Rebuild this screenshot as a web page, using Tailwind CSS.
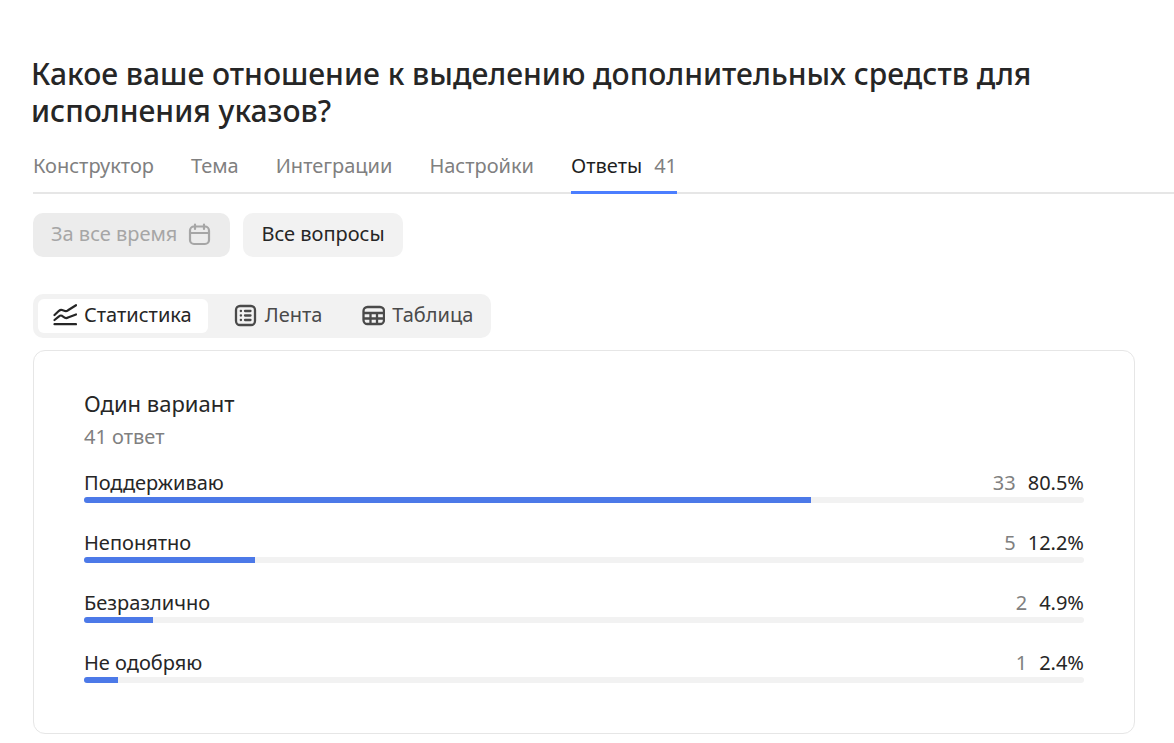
<!DOCTYPE html>
<html lang="ru">
  <head>
    <meta charset="UTF-8" />
    <meta name="viewport" content="width=device-width, initial-scale=1.0" />
    <title>Ответы на опрос</title>
    <script src="https://cdn.jsdelivr.net/npm/@tailwindcss/browser@4"></script>
  </head>
  <body class="min-h-screen bg-white pl-[33px] pt-[55px] pb-2 font-['Noto_Sans','Open_Sans',sans-serif] text-xl leading-7 text-[#262626]">
    <!-- Header -->
    <header>
      <h1 class="-ml-0.5 mr-24 text-[30px] leading-[37px] font-medium">Какое ваше отношение к выделению дополнительных средств для исполнения указов?</h1>

      <!-- Tabs -->
      <nav class="mt-[23px] flex gap-[37px] border-b-2 border-[#e6e6e6] text-[#808080]">
        <a href="#" class="pb-3">Конструктор</a>
        <a href="#" class="pb-3">Тема</a>
        <a href="#" class="pb-3">Интеграции</a>
        <a href="#" class="pb-3">Настройки</a>
        <a href="#" aria-current="page" class="-mb-0.5 flex gap-3 border-b-3 border-[#4b7eff] text-[#1f1f1f]">Ответы <span class="text-[#808080]">41</span></a>
      </nav>
    </header>

    <main class="mr-[39px]">
      <!-- Filters -->
      <div class="mt-[19px] flex gap-[13px]">
        <button type="button" disabled class="flex h-11 items-center gap-[11px] rounded-[10px] bg-[#ececec] px-[18px] text-[#a6a6a6]">
          <span class="pb-0.5">За все время</span>
          <svg class="size-6" viewBox="0 0 24 24" fill="none" stroke="currentColor" stroke-width="2.2" stroke-linecap="round">
            <rect x="2" y="3.500" width="19" height="17.500" rx="4" />
            <path d="M2 10h19M7 1.500v4.500M16 1.500v4.500" />
          </svg>
        </button>
        <button type="button" class="h-11 rounded-[10px] bg-[#f2f2f2] px-[18px] pb-0.5">Все вопросы</button>
      </div>

      <!-- View switcher -->
      <div class="mt-[37px] flex h-11 w-fit rounded-[10px] bg-[#f2f2f2] p-[5px] text-[#4a4a4a]">
        <button type="button" aria-pressed="true" class="flex items-center gap-[7px] rounded-md bg-white pr-4 pl-[15px] text-[#262626]">
          <svg class="size-6" viewBox="0 0 24 24" fill="none" stroke="currentColor" stroke-width="2.2" stroke-linecap="round" stroke-linejoin="round">
            <path d="M1.500 11L6 6.800Q7.500 5.500 9 6L12 7Q13.500 7.400 15 6.300L23 1.200" />
            <path d="M1.500 16L6 12.300Q7.500 11 9 11.800L12 13.800Q13.500 14.500 15 13.500L23 10.500" />
            <path d="M1.500 20.200H23" />
          </svg>
          <span class="pb-0.5">Статистика</span>
        </button>
        <button type="button" class="flex items-center gap-[7px] px-[26px]">
          <svg class="size-6" viewBox="0 0 24 24" fill="none" stroke="currentColor" stroke-width="2.3" stroke-linecap="round">
            <rect x="2" y="2" width="19" height="19" rx="4" />
            <path d="M11 7h5.500M11 11.500h5.500M11 16h5.500M6.800 7h.2M6.800 11.500h.2M6.800 16h.2" />
          </svg>
          <span class="pb-0.5">Лента</span>
        </button>
        <button type="button" class="flex items-center gap-[7px] px-[13px]">
          <svg class="size-6" viewBox="0 0 24 24" fill="none" stroke="currentColor" stroke-width="2.3">
            <rect x="2.500" y="3" width="20.500" height="17" rx="4" />
            <path d="M2.500 9H23M2.500 14.500H23M9.500 9V20M16 9V20" />
          </svg>
          <span class="pb-0.5">Таблица</span>
        </button>
      </div>

      <!-- Statistics card -->
      <section class="mt-3 rounded-xl border border-[#e6e6e6] px-[50px] pt-[37px] pb-[50px]">
        <h2 class="text-[22px] leading-[30px]">Один вариант</h2>
        <p class="mt-[5px] text-[#808080]">41 ответ</p>
        <ul class="mt-[18px] flex flex-col gap-[26px]">
          <li>
            <div class="flex gap-3"><span class="grow">Поддерживаю</span><span class="text-[#808080]">33</span><span>80.5%</span></div>
            <div class="h-1.5 overflow-hidden rounded-full bg-[#f2f2f2]"><div class="h-full bg-[#4c79e8]" style="width: 72.7%"></div></div>
          </li>
          <li>
            <div class="flex gap-3"><span class="grow">Непонятно</span><span class="text-[#808080]">5</span><span>12.2%</span></div>
            <div class="h-1.5 overflow-hidden rounded-full bg-[#f2f2f2]"><div class="h-full bg-[#4c79e8]" style="width: 17.1%"></div></div>
          </li>
          <li>
            <div class="flex gap-3"><span class="grow">Безразлично</span><span class="text-[#808080]">2</span><span>4.9%</span></div>
            <div class="h-1.5 overflow-hidden rounded-full bg-[#f2f2f2]"><div class="h-full bg-[#4c79e8]" style="width: 6.9%"></div></div>
          </li>
          <li>
            <div class="flex gap-3"><span class="grow">Не одобряю</span><span class="text-[#808080]">1</span><span>2.4%</span></div>
            <div class="h-1.5 overflow-hidden rounded-full bg-[#f2f2f2]"><div class="h-full bg-[#4c79e8]" style="width: 3.4%"></div></div>
          </li>
        </ul>
      </section>
    </main>
  </body>
</html>
